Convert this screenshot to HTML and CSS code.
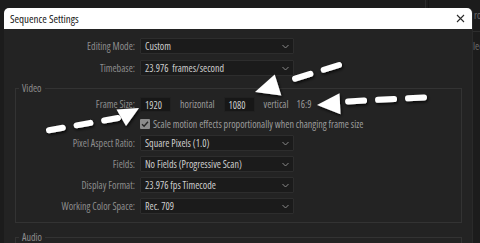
FILE: index.html
```html
<!DOCTYPE html>
<html>
<head>
<meta charset="utf-8">
<link rel="stylesheet" href="styles.css">
</head>
<body>
<div class="app">
  <div class="bg-divider bg-divider-a"></div>
  <div class="bg-divider bg-divider-b"></div>
  <div class="bg-text bg-text-a">ro</div>
  <div class="bg-rule"></div>
  <div class="bg-text bg-text-b">lee</div>

  <div class="dialog">
    <div class="titlebar">
      <span class="title">Sequence Settings</span>
      <svg class="close" width="9" height="9" viewBox="0 0 9 9"><path d="M1 1L8 8M8 1L1 8" stroke="#2b2b2b" stroke-width="1.1" fill="none"/></svg>
    </div>
    <div class="body">
      <div class="form top-form">
        <label class="lbl">Editing Mode:</label>
        <div class="select"><span>Custom</span><svg class="chev" width="7" height="5" viewBox="0 0 7 5"><path d="M0.5 1L3.5 4L6.5 1" stroke="#8a8a8a" fill="none"/></svg></div>
        <label class="lbl">Timebase:</label>
        <div class="select"><span>23.976&nbsp; frames/second</span><svg class="chev" width="7" height="5" viewBox="0 0 7 5"><path d="M0.5 1L3.5 4L6.5 1" stroke="#8a8a8a" fill="none"/></svg></div>
      </div>

      <div class="group">
        <div class="legend">Video</div>
        <div class="form group-form">
          <label class="lbl">Frame Size:</label>
          <div class="size-row">
            <div class="num">1920</div>
            <span class="unit">horizontal</span>
            <div class="num">1080</div>
            <span class="unit">vertical</span>
            <span class="unit">16:9</span>
          </div>
          <span class="lbl"></span>
          <div class="check-row">
            <span class="check"><svg width="10" height="10" viewBox="0 0 10 10"><path d="M2 5.2L4.1 7.3L8 2.8" stroke="#262626" stroke-width="1.4" fill="none"/></svg></span>
            <span class="check-text">Scale motion effects proportionally when changing frame size</span>
          </div>
          <label class="lbl">Pixel Aspect Ratio:</label>
          <div class="select"><span>Square Pixels (1.0)</span><svg class="chev" width="7" height="5" viewBox="0 0 7 5"><path d="M0.5 1L3.5 4L6.5 1" stroke="#8a8a8a" fill="none"/></svg></div>
          <label class="lbl">Fields:</label>
          <div class="select"><span>No Fields (Progressive Scan)</span><svg class="chev" width="7" height="5" viewBox="0 0 7 5"><path d="M0.5 1L3.5 4L6.5 1" stroke="#8a8a8a" fill="none"/></svg></div>
          <label class="lbl">Display Format:</label>
          <div class="select"><span>23.976 fps Timecode</span><svg class="chev" width="7" height="5" viewBox="0 0 7 5"><path d="M0.5 1L3.5 4L6.5 1" stroke="#8a8a8a" fill="none"/></svg></div>
          <label class="lbl">Working Color Space:</label>
          <div class="select"><span>Rec. 709</span><svg class="chev" width="7" height="5" viewBox="0 0 7 5"><path d="M0.5 1L3.5 4L6.5 1" stroke="#8a8a8a" fill="none"/></svg></div>
        </div>
      </div>

      <div class="group audio">
        <div class="legend">Audio</div>
      </div>
    </div>
  </div>

  <svg class="arrows" width="480" height="243" viewBox="0 0 480 243">
    <defs>
      <filter id="sh" x="-20%" y="-50%" width="140%" height="200%">
        <feDropShadow dx="1" dy="1.5" stdDeviation="1.6" flood-color="#000" flood-opacity="0.85"/>
      </filter>
    </defs>
    <g filter="url(#sh)" fill="#fff" stroke="#fff">
      <path d="M339 65L295 78.7" stroke-width="6" stroke-linecap="round" stroke-dasharray="16 14" fill="none"/>
      <polygon points="255,92 281.3,95.5 274.7,74.5" stroke="none"/>
      <path d="M49 130.2L121 117.5" stroke-width="6" stroke-linecap="round" stroke-dasharray="14 14" fill="none"/>
      <polygon points="139,108 116.5,109.5 126,126" stroke="none"/>
      <path d="M424 97.5L346 101.5" stroke-width="6" stroke-linecap="round" stroke-dasharray="16 14" fill="none"/>
      <polygon points="317,105 340.5,114.3 339.5,93.3" stroke="none"/>
    </g>
  </svg>
</div>
</body>
</html>
```
FILE: styles.css
```css
* { box-sizing: border-box; }
html, body { margin: 0; padding: 0; }
body {
  background: #1a1a1a;
  font-family: "Open Sans", "Liberation Sans", Arial, sans-serif;
  font-stretch: 75%;
  font-size: 10px;
  overflow: hidden;
}
.app {
  position: relative;
  width: 480px;
  height: 243px;
  overflow: hidden;
  background: #1c1c1c;
}
.bg-divider {
  position: absolute;
  top: 0;
  width: 1px;
  height: 8px;
  background: #2c2c2c;
}
.bg-divider-a { left: 425px; }
.bg-divider-b { left: 428px; background: #141414; }
.bg-text {
  position: absolute;
  color: #6c6c6c;
  font-size: 10px;
  line-height: 12px;
}
.bg-text-a { left: 474px; top: 9px; }
.bg-text-b { left: 473px; top: 40px; }
.bg-rule {
  position: absolute;
  left: 472px;
  top: 31px;
  width: 8px;
  height: 1px;
  background: #2d2d2d;
}

.dialog {
  position: absolute;
  left: 4px;
  top: 8px;
  width: 468px;
  height: 240px;
  background: #232323;
  border-radius: 5px 5px 0 0;
  overflow: hidden;
  box-shadow: 1px 0 0 #2a2a2a;
}
.titlebar {
  height: 21px;
  background: #ffffff;
  display: flex;
  align-items: center;
  justify-content: space-between;
  padding: 0 6px 0 6px;
}
.title {
  color: #161616;
  font-size: 11px;
}
.close { display: block; margin-right: 1px; }

.body { padding-top: 9px; }

.form {
  display: grid;
  grid-template-columns: 119px 154px;
  column-gap: 5px;
  align-items: center;
}
.top-form {
  margin-left: 12px;
  row-gap: 6px;
  grid-auto-rows: 16px;
}
.lbl {
  text-align: right;
  color: #8d8d8d;
  white-space: nowrap;
}
.select {
  height: 16px;
  background: #1b1b1b;
  border: 1px solid #2d2d2d;
  border-radius: 1px;
  display: flex;
  align-items: center;
  justify-content: space-between;
  padding: 0 4px 0 4px;
  color: #cdcdcd;
  white-space: nowrap;
}
.chev { display: block; }

.group {
  border: 1px solid #333333;
  margin: 12px 10px 0 11px;
  padding-bottom: 8px;
}
.legend {
  width: max-content;
  height: 12px;
  line-height: 12px;
  margin: -7px 0 0 3px;
  padding: 0 3px;
  background: #232323;
  color: #8d8d8d;
}
.group-form {
  margin-top: 2px;
  row-gap: 5px;
  grid-template-rows: 16px 13px 16px 16px 16px 16px;
}
.size-row {
  display: flex;
  align-items: center;
  white-space: nowrap;
}
.num {
  flex: 0 0 31px;
  width: 31px;
  height: 15px;
  line-height: 14px;
  background: #171717;
  border: 1px solid #202020;
  color: #cdcdcd;
  padding-left: 4px;
}
.unit { color: #9a9a9a; }
.size-row .unit { margin: 0 9px; }
.size-row .unit:last-child { margin: 0 0 0 -1px; }
.check-row {
  display: flex;
  align-items: center;
  gap: 3px;
  white-space: nowrap;
}
.check {
  width: 10px;
  height: 10px;
  background: #8b8b8b;
  border-radius: 1px;
  display: block;
}
.check svg { display: block; }
.check-text { color: #9c9c9c; }

.audio {
  margin-top: 14px;
  height: 20px;
  padding-bottom: 0;
}

.arrows {
  position: absolute;
  left: 0;
  top: 0;
  pointer-events: none;
}
```
